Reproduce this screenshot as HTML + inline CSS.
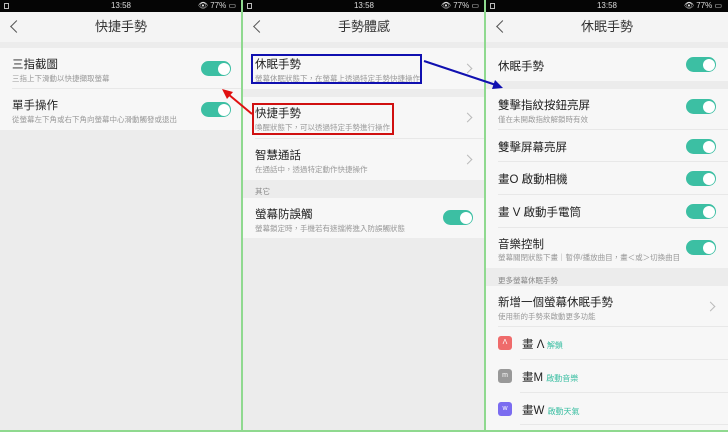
<!DOCTYPE html><html><head><meta charset="utf-8"><style>
*{margin:0;padding:0;box-sizing:border-box}
body{width:728px;height:432px;overflow:hidden;background:#ebebeb;font-family:"Liberation Sans","Noto Sans CJK TC",sans-serif;position:relative}
.p{position:absolute;top:0;height:432px;width:242px;background:#ececec;overflow:hidden}
.sb{position:absolute;left:0;top:0;width:100%;height:12px;background:#050505;color:#ddd;font-size:8px;text-align:center;line-height:12px}
.sb .r{position:absolute;right:6px;top:0}
.sb .l{position:absolute;left:4px;top:3px;width:5px;height:6px;border:1px solid #bbb}
.hd{position:absolute;top:12px;left:0;width:100%;height:30px;background:#f4f4f4;text-align:center;font-size:13px;line-height:30px;color:#333}
.bk{position:absolute;left:12px;top:10px;width:9px;height:9px;border-left:1.3px solid #555;border-bottom:1.3px solid #555;transform:rotate(45deg)}
.row{position:absolute;left:0;width:100%;background:#f7f7f7}
.t{position:absolute;left:12px;font-size:11.5px;color:#222}
.s{position:absolute;left:12px;font-size:7.5px;color:#999;white-space:nowrap}
.ln{position:absolute;left:12px;right:0;bottom:0;height:1px;background:#e8e8e8}
.tg{position:absolute;width:30px;height:15px;border-radius:8px;background:#3cbfa3}
.tg:after{content:"";position:absolute;right:1.5px;top:1.5px;width:12px;height:12px;border-radius:50%;background:#fff}
.ch{position:absolute;right:14px;width:7px;height:7px;border-top:1px solid #bbb;border-right:1px solid #bbb;transform:rotate(45deg)}
.gl{position:absolute;left:12px;font-size:7.5px;color:#888}
.ic{position:absolute;left:12px;width:14px;height:14px;border-radius:3px;color:#fff;font-size:7px;text-align:center;line-height:14px}
.sep{position:absolute;top:0;width:2px;height:432px;background:#8fd98f}
</style></head><body>
<!-- Panel 1 -->
<div class="p" style="left:0">
<div class="sb"><span class="l"></span>13:58<span class="r">👁 77% ▭</span></div>
<div class="hd"><span class="bk"></span>快捷手勢</div>
<div class="row" style="top:48px;height:41px"><div class="t" style="top:8px">三指截圖</div><div class="s" style="top:25px">三指上下滑動以快捷擷取螢幕</div><div class="tg" style="left:201px;top:13px"></div><div class="ln"></div></div>
<div class="row" style="top:89px;height:41px"><div class="t" style="top:8px">單手操作</div><div class="s" style="top:25px">從螢幕左下角或右下角向螢幕中心滑動觸發或退出</div><div class="tg" style="left:201px;top:13px"></div></div>
</div>
<!-- Panel 2 -->
<div class="p" style="left:243px">
<div class="sb"><span class="l"></span>13:58<span class="r">👁 77% ▭</span></div>
<div class="hd"><span class="bk"></span>手勢體感</div>
<div class="row" style="top:48px;height:41px"><div class="t" style="top:8px">休眠手勢</div><div class="s" style="top:25px">螢幕休眠狀態下，在螢幕上透過特定手勢快捷操作</div><div class="ch" style="top:17px"></div></div>
<div class="row" style="top:97px;height:42px"><div class="t" style="top:8px">快捷手勢</div><div class="s" style="top:25px">喚醒狀態下，可以透過特定手勢進行操作</div><div class="ch" style="top:17px"></div><div class="ln"></div></div>
<div class="row" style="top:139px;height:41px"><div class="t" style="top:8px">智慧通話</div><div class="s" style="top:25px">在通話中，透過特定動作快捷操作</div><div class="ch" style="top:17px"></div></div>
<div class="gl" style="top:186px">其它</div>
<div class="row" style="top:198px;height:40px"><div class="t" style="top:8px">螢幕防誤觸</div><div class="s" style="top:25px">螢幕鎖定時，手機若有遮擋將進入防誤觸狀態</div><div class="tg" style="left:200px;top:12px"></div></div>
<div style="position:absolute;left:8px;top:14px;width:171px;height:30px;border:2px solid #1010b0;top:54px"></div>
<div style="position:absolute;left:9px;top:103px;width:142px;height:32px;border:2px solid #d01010"></div>
</div>
<!-- Panel 3 -->
<div class="p" style="left:486px">
<div class="sb"><span class="l"></span>13:58<span class="r">👁 77% ▭</span></div>
<div class="hd"><span class="bk"></span>休眠手勢</div>
<div class="row" style="top:48px;height:33px"><div class="t" style="top:10px">休眠手勢</div><div class="tg" style="left:200px;top:9px"></div></div>
<div class="row" style="top:89px;height:41px"><div class="t" style="top:8px">雙擊指紋按鈕亮屏</div><div class="s" style="top:25px">僅在未開啟指紋解鎖時有效</div><div class="tg" style="left:200px;top:10px"></div><div class="ln"></div></div>
<div class="row" style="top:130px;height:32px"><div class="t" style="top:9px">雙擊屏幕亮屏</div><div class="tg" style="left:200px;top:9px"></div><div class="ln"></div></div>
<div class="row" style="top:162px;height:33px"><div class="t" style="top:9px">畫O 啟動相機</div><div class="tg" style="left:200px;top:9px"></div><div class="ln"></div></div>
<div class="row" style="top:195px;height:33px"><div class="t" style="top:9px">畫 V 啟動手電筒</div><div class="tg" style="left:200px;top:9px"></div><div class="ln"></div></div>
<div class="row" style="top:228px;height:40px"><div class="t" style="top:8px">音樂控制</div><div class="s" style="top:24px">螢幕關閉狀態下畫｜暫停/播放曲目，畫＜或＞切換曲目</div><div class="tg" style="left:200px;top:12px"></div></div>
<div class="gl" style="top:275px">更多螢幕休眠手勢</div>
<div class="row" style="top:286px;height:146px">
<div class="t" style="top:8px">新增一個螢幕休眠手勢</div><div class="s" style="top:25px">使用新的手勢來啟動更多功能</div><div class="ch" style="top:17px"></div>
<div style="position:absolute;left:12px;right:0;top:40px;height:1px;background:#e8e8e8"></div>
<div class="ic" style="top:50px;background:#ef6b6b">Λ</div><div class="t" style="left:36px;top:50px">畫 Λ <span style="font-size:8px;color:#3cbfa3">解鎖</span></div>
<div style="position:absolute;left:34px;right:0;top:73px;height:1px;background:#e8e8e8"></div>
<div class="ic" style="top:83px;background:#999">m</div><div class="t" style="left:36px;top:83px">畫M <span style="font-size:8px;color:#3cbfa3">啟動音樂</span></div>
<div style="position:absolute;left:34px;right:0;top:106px;height:1px;background:#e8e8e8"></div>
<div class="ic" style="top:116px;background:#7b6cf0">w</div><div class="t" style="left:36px;top:116px">畫W <span style="font-size:8px;color:#3cbfa3">啟動天氣</span></div>
<div style="position:absolute;left:34px;right:0;top:138px;height:1px;background:#e8e8e8"></div>
</div>
</div>
<div class="sep" style="left:241px"></div>
<div class="sep" style="left:484px"></div>
<div style="position:absolute;left:0;top:430px;width:728px;height:2px;background:#8fd98f"></div>
<svg width="728" height="432" style="position:absolute;left:0;top:0">
<line x1="252" y1="114" x2="228" y2="94" stroke="#e01010" stroke-width="2"/>
<polygon points="222,89 233,92 227,99" fill="#e01010"/>
<line x1="424" y1="61" x2="496" y2="85" stroke="#1010b0" stroke-width="2"/>
<polygon points="503,88 492,89 495,80" fill="#1010b0"/>
</svg>
</body></html>
